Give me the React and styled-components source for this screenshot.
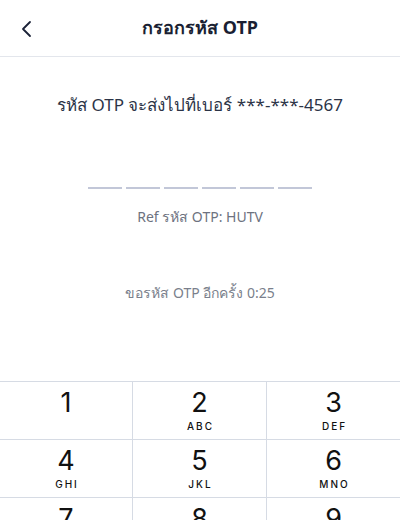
import React from 'react'
import styled, { createGlobalStyle } from 'styled-components'

const Global = createGlobalStyle`
  * { box-sizing: border-box; }
  body {
    margin: 0;
    background: #ffffff;
    font-family: 'Noto Sans', 'Liberation Sans', sans-serif;
  }
`

const keys = [
  ['1', ''], ['2', 'ABC'], ['3', 'DEF'],
  ['4', 'GHI'], ['5', 'JKL'], ['6', 'MNO'],
  ['7', 'PQRS'], ['8', 'TUV'], ['9', 'WXYZ'],
]

export default function App() {
  return (
    <Page>
      <Global />
      <Header>
        <Back aria-label="back">
          <svg width="14" height="18" viewBox="0 0 14 18" fill="none">
            <path d="M10 2 L3 9 L10 16" stroke="#1b2238" strokeWidth="1.8" strokeLinecap="round" strokeLinejoin="round" />
          </svg>
        </Back>
        <Title>กรอกรหัส OTP</Title>
      </Header>
      <Body>
        <Message>รหัส OTP จะส่งไปที่เบอร์ ***-***-4567</Message>
        <Dashes>
          {Array.from({ length: 6 }).map((_, i) => <Dash key={i} />)}
        </Dashes>
        <Ref>Ref รหัส OTP: HUTV</Ref>
        <Resend>ขอรหัส OTP อีกครั้ง 0:25</Resend>
      </Body>
      <Keypad>
        {keys.map(([d, l], i) => (
          <Key key={d} $last={i % 3 === 2}>
            <Digit>{d}</Digit>
            {l && <Letters>{l}</Letters>}
          </Key>
        ))}
      </Keypad>
    </Page>
  )
}

const Page = styled.div`
  width: 400px;
  height: 520px;
  overflow: hidden;
  display: flex;
  flex-direction: column;
`

const Header = styled.header`
  flex-shrink: 0;
  height: 57px;
  border-bottom: 1px solid #e3e6ec;
  display: flex;
  align-items: center;
  justify-content: center;
  position: relative;
`

const Back = styled.button`
  position: absolute;
  left: 20px;
  top: 20px;
  background: none;
  border: 0;
  padding: 0;
  display: flex;
`

const Title = styled.h1`
  margin: 0 0 2px;
  font-size: 18px;
  font-weight: 700;
  color: #1a1f33;
`

const Body = styled.main`
  flex-shrink: 0;
  height: 324px;
  display: flex;
  flex-direction: column;
  align-items: center;
  padding-top: 34px;
`

const Message = styled.p`
  margin: 0;
  font-size: 17px;
  color: #2c3447;
`

const Dashes = styled.div`
  display: flex;
  gap: 4px;
  margin-top: 69px;
`

const Dash = styled.span`
  width: 34px;
  height: 2px;
  background: #c2c7d8;
`

const Ref = styled.p`
  margin: 17px 0 0;
  font-size: 14px;
  color: #6d7280;
`

const Resend = styled.p`
  margin: 54px 0 0;
  font-size: 14px;
  color: #7a7f8c;
`

const Keypad = styled.section`
  flex-shrink: 0;
  display: grid;
  grid-template-columns: 133px 134px 133px;
  border-top: 1px solid #d6dbe4;
`

const Key = styled.div`
  height: 58px;
  display: flex;
  flex-direction: column;
  align-items: center;
  padding-top: 6px;
  border-bottom: 1px solid #d6dbe4;
  border-right: ${p => (p.$last ? 'none' : '1px solid #d6dbe4')};
  color: #111111;
`

const Digit = styled.span`
  font-family: 'Inter', 'Liberation Sans', sans-serif;
  font-size: 27px;
  line-height: 30px;
`

const Letters = styled.span`
  font-family: 'Inter', 'Liberation Sans', sans-serif;
  font-size: 10px;
  font-weight: 500;
  letter-spacing: 2px;
  margin-top: 2px;
  margin-right: -2px;
`
